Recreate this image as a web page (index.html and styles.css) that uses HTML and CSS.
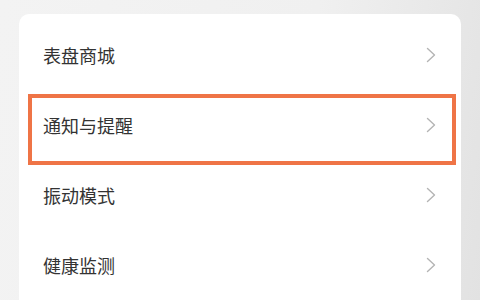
FILE: index.html
```html
<!DOCTYPE html>
<html lang="zh-CN">
<head>
    <meta charset="UTF-8">
    <meta name="viewport" content="width=device-width, initial-scale=1.0">
    <title>设置</title>
    <link rel="stylesheet" href="styles.css">
</head>
<body>
    <div class="page">
        <div class="card">
            <div class="row">
                <span class="row-label">表盘商城</span>
                <svg class="chevron" width="10" height="16" viewBox="0 0 10 16"><polyline points="1.5,1.5 8.5,8 1.5,14.5"/></svg>
            </div>
            <div class="row">
                <span class="row-label">通知与提醒</span>
                <svg class="chevron" width="10" height="16" viewBox="0 0 10 16"><polyline points="1.5,1.5 8.5,8 1.5,14.5"/></svg>
            </div>
            <div class="row">
                <span class="row-label">振动模式</span>
                <svg class="chevron" width="10" height="16" viewBox="0 0 10 16"><polyline points="1.5,1.5 8.5,8 1.5,14.5"/></svg>
            </div>
            <div class="row">
                <span class="row-label">健康监测</span>
                <svg class="chevron" width="10" height="16" viewBox="0 0 10 16"><polyline points="1.5,1.5 8.5,8 1.5,14.5"/></svg>
            </div>
            <!-- 标注框 -->
            <div class="highlight"></div>
        </div>
    </div>
</body>
</html>
```

FILE: styles.css
```css
* {
    margin: 0;
    padding: 0;
    box-sizing: border-box;
}

body {
    font-family: "Noto Sans CJK SC", "Noto Sans", sans-serif;
    background: linear-gradient(100deg, #f3f3f3 0%, #f0f0f0 60%, #e2e2e2 100%);
    height: 300px;
    overflow: hidden;
}

.page {
    padding: 14px 19px 0 19px;
}

.card {
    position: relative;
    background-color: #ffffff;
    border-radius: 10px 10px 0 0;
    padding-top: 6px;
    height: 286px;
}

.row {
    height: 70px;
    display: flex;
    align-items: center;
    justify-content: space-between;
    padding: 0 25px 0 24px;
}

.row-label {
    font-size: 18px;
    color: #333333;
}

.chevron polyline {
    fill: none;
    stroke: #b4b4b4;
    stroke-width: 1.4;
    stroke-linecap: round;
    stroke-linejoin: round;
}

.highlight {
    position: absolute;
    left: 9px;
    top: 80px;
    width: 428px;
    height: 71px;
    border: 4px solid #ef7446;
}
```
